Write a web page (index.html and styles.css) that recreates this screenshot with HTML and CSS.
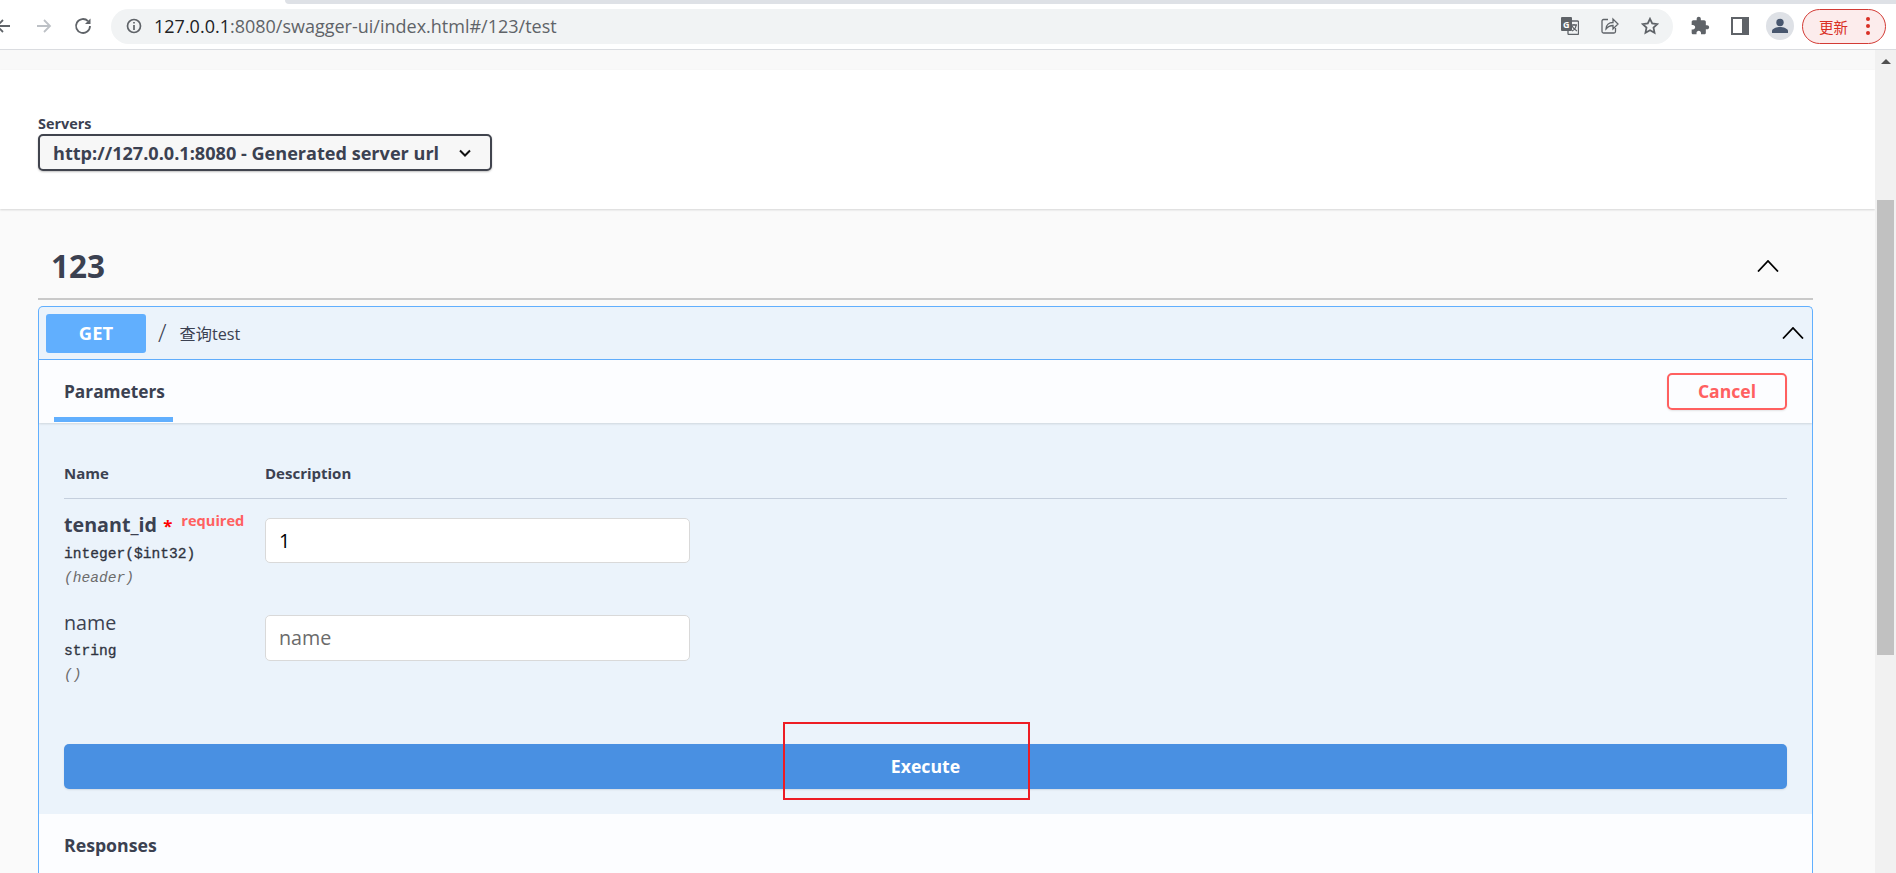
FILE: index.html
```html
<!DOCTYPE html>
<html lang="en">
<head>
    <meta charset="UTF-8">
    <meta name="viewport" content="width=device-width, initial-scale=1.0">
    <title>Swagger UI</title>
    <link rel="stylesheet" href="styles.css">
</head>
<body>
    <!-- Browser chrome -->
    <div class="tab-strip"><div class="tab-edge"></div></div>
    <header class="toolbar">
        <svg class="nav-icon back" viewBox="0 0 18 18"><path d="M16 9H3M9 3L3 9l6 6"/></svg>
        <svg class="nav-icon forward" viewBox="0 0 18 18"><path d="M2 9h13M9 3l6 6-6 6"/></svg>
        <svg class="nav-icon reload" viewBox="0 0 18 18"><path d="M16 9a7 7 0 1 1-2-4.900"/><path class="solid" d="M16.500 1.500v5.500h-5.500z"/></svg>
        <div class="address-bar">
            <svg class="info-icon" viewBox="0 0 16 16"><circle cx="8" cy="8" r="6.500"/><path d="M8 7v5M8 4v1.600"/></svg>
            <span class="url"><span class="url-host">127.0.0.1</span>:8080/swagger-ui/index.html#/123/test</span>
            <div class="address-actions">
                <svg class="bar-icon" viewBox="0 0 18 18">
                    <rect class="solid" x="0" y="0" width="11" height="14" rx="1"/>
                    <rect x="7" y="4" width="10.500" height="13.500" rx="1"/>
                    <text x="2" y="10.500" class="translate-g">G</text>
                    <path d="M10 8h6M13 7v1M11 14c2-1 4-3 4-6M11 9c1 2 3 4 5 5"/>
                </svg>
                <svg class="bar-icon" viewBox="0 0 18 18"><path d="M7 2.500H2.500a1.500 1.500 0 0 0-1.500 1.500v10.500a1.500 1.500 0 0 0 1.500 1.500h10.500a1.500 1.500 0 0 0 1.500-1.500V11"/><path d="M5 12c0-4 3-6.500 7-6.500V2l5 5-5 5V8.500c-3 0-5 1-7 3.500z"/></svg>
                <svg class="bar-icon star" viewBox="0 0 18 18"><path d="M9 1.800l2.200 4.700 5.100.6-3.800 3.500 1 5.100L9 13.200l-4.500 2.500 1-5.100-3.800-3.500 5.100-.6z"/></svg>
            </div>
        </div>
        <svg class="puzzle-icon" viewBox="0 0 24 24"><path d="M20.500 11H19V7c0-1.100-.9-2-2-2h-4V3.500C13 2.120 11.880 1 10.500 1S8 2.120 8 3.500V5H4c-1.100 0-1.990.9-1.990 2v3.800H3.500c1.490 0 2.700 1.210 2.700 2.700s-1.210 2.700-2.700 2.700H2V20c0 1.100.9 2 2 2h3.800v-1.500c0-1.490 1.210-2.700 2.700-2.700 1.490 0 2.700 1.210 2.700 2.700V22H17c1.100 0 2-.9 2-2v-4h1.500c1.380 0 2.500-1.120 2.500-2.500S21.880 11 20.500 11z"/></svg>
        <div class="side-panel-icon"></div>
        <div class="avatar">
            <svg viewBox="0 0 28 28"><circle cx="14" cy="10.500" r="3.700"/><path d="M6 21v-2c0-2.500 5-4 8-4s8 1.500 8 4v2z"/></svg>
        </div>
        <div class="update-button">
            <span class="update-label">更新</span>
            <span class="update-dots"><i></i><i></i><i></i></span>
        </div>
    </header>

    <div class="viewport">
        <main class="page">
            <div class="top-strip"></div>

            <!-- Servers -->
            <section class="servers">
                <div class="servers-label">Servers</div>
                <div class="server-select">
                    <span>http://127.0.0.1:8080 - Generated server url</span>
                    <svg class="select-arrow" viewBox="0 0 12 8"><path d="M1 1.500l5 5 5-5"/></svg>
                </div>
            </section>

            <section class="tag-section">
                <div class="tag-heading">
                    <h2>123</h2>
                    <svg class="chevron" viewBox="0 0 22 12"><path d="M1 11.500L11 1l10 10.500"/></svg>
                </div>

                <!-- Operation -->
                <div class="opblock">
                    <div class="opblock-summary">
                        <span class="method">GET</span>
                        <span class="path">/</span>
                        <span class="summary-text">查询test</span>
                        <svg class="chevron" viewBox="0 0 22 12"><path d="M1 11.500L11 1l10 10.500"/></svg>
                    </div>

                    <div class="tab-header">
                        <div class="tab-active">Parameters</div>
                        <button class="cancel-button">Cancel</button>
                    </div>

                    <div class="parameters">
                        <div class="param-head">
                            <div class="col-name">Name</div>
                            <div>Description</div>
                        </div>

                        <div class="param-row first">
                            <div class="col-name">
                                <div class="param-name bold">tenant_id <span class="star-mark">*</span><span class="required">required</span></div>
                                <div class="param-type">integer($int32)</div>
                                <div class="param-in">(header)</div>
                            </div>
                            <input class="param-input" type="text" value="1">
                        </div>

                        <div class="param-row">
                            <div class="col-name">
                                <div class="param-name">name</div>
                                <div class="param-type">string</div>
                                <div class="param-in">()</div>
                            </div>
                            <input class="param-input tall" type="text" placeholder="name">
                        </div>

                        <button class="execute-button">Execute</button>
                    </div>

                    <div class="responses">Responses</div>
                </div>
            </section>
        </main>

        <div class="scrollbar">
            <div class="scroll-up"></div>
            <div class="scroll-thumb"></div>
        </div>
    </div>

    <!-- Annotation drawn over the screenshot -->
    <div class="red-box"></div>
</body>
</html>
```

FILE: styles.css
```css
* {
    box-sizing: border-box;
}

html, body {
    margin: 0;
    height: 873px;
    overflow: hidden;
}

body {
    position: relative;
    font-family: "Open Sans", "Noto Sans CJK SC", sans-serif;
    background-color: #fff;
    color: #3b4151;
}

svg {
    display: block;
    flex: none;
}

/* Browser chrome */
.tab-strip {
    height: 4px;
    padding-left: 285px;
}

.tab-edge {
    height: 4px;
    background-color: #dee1e6;
    border-bottom-left-radius: 6px;
}

.toolbar {
    display: flex;
    align-items: center;
    height: 46px;
    border-bottom: 1px solid #dadce0;
    padding-bottom: 1px;
}

.nav-icon {
    width: 18px;
    height: 18px;
    fill: none;
    stroke: #5f6368;
    stroke-width: 1.8;
}

.nav-icon .solid {
    fill: #5f6368;
    stroke: none;
}

.back {
    margin-left: -6px;
}

.forward {
    margin-left: 23px;
    stroke: #bdc1c6;
}

.reload {
    margin-left: 21px;
}

.address-bar {
    display: flex;
    align-items: center;
    width: 1562px;
    height: 35px;
    margin-left: 19px;
    padding-left: 15px;
    border-radius: 18px;
    background-color: #f1f3f4;
}

.info-icon {
    width: 16px;
    height: 16px;
    fill: none;
    stroke: #5f6368;
    stroke-width: 1.700;
}

.url {
    margin-left: 12px;
    font-family: "Open Sans", sans-serif;
    font-size: 18px;
    color: #5f6368;
    white-space: nowrap;
}

.url-host {
    color: #202124;
}

.address-actions {
    display: flex;
    gap: 22px;
    margin-left: auto;
    margin-right: 14px;
}

.bar-icon {
    width: 18px;
    height: 18px;
    fill: none;
    stroke: #5f6368;
    stroke-width: 1.300;
}

.bar-icon .solid {
    fill: #5f6368;
    stroke: none;
}

.bar-icon.star {
    stroke-width: 1.800;
}

.translate-g {
    font-family: "Open Sans", sans-serif;
    font-size: 9px;
    font-weight: 700;
    fill: #fff;
    stroke: none;
}

.puzzle-icon {
    width: 20px;
    height: 20px;
    margin-left: 17px;
    fill: #5f6368;
}

.side-panel-icon {
    width: 18px;
    height: 18px;
    margin-left: 21px;
    border: 2px solid #5f6368;
    border-right-width: 7px;
}

.avatar {
    width: 28px;
    height: 28px;
    margin-left: 17px;
    border-radius: 50%;
    background-color: #dee1e6;
}

.avatar svg {
    fill: #47566e;
}

.update-button {
    display: flex;
    align-items: center;
    width: 84px;
    height: 35px;
    margin-left: 8px;
    padding-left: 16px;
    border: 1px solid #d33b35;
    border-radius: 18px;
    background-color: #fcecec;
    color: #d93025;
    font-size: 14.500px;
}

.update-dots {
    display: flex;
    flex-direction: column;
    gap: 3px;
    margin-left: 18px;
}

.update-dots i {
    display: block;
    width: 4px;
    height: 4px;
    border-radius: 50%;
    background-color: #d93025;
}

/* Page */
.viewport {
    display: flex;
    height: 823px;
}

.page {
    flex: 1;
    min-width: 0;
    background-color: #fafafa;
}

.top-strip {
    height: 20px;
    background-color: #f9f9f9;
}

.servers {
    height: 139px;
    padding: 44px 0 0 38px;
    background-color: #fff;
    box-shadow: 0 1px 2px rgba(0, 0, 0, 0.15);
}

.servers-label {
    font-size: 14.400px;
    font-weight: 700;
    line-height: 20px;
}

.server-select {
    display: flex;
    align-items: center;
    justify-content: space-between;
    width: 454px;
    height: 37px;
    padding: 0 19px 0 13px;
    border: 2px solid #41444e;
    border-radius: 5px;
    background-color: #f7f7f7;
    box-shadow: 0 1px 2px rgba(0, 0, 0, 0.25);
    font-size: 18.100px;
    font-weight: 700;
}

.select-arrow {
    width: 12px;
    height: 8px;
    fill: none;
    stroke: #111;
    stroke-width: 2;
}

.tag-section {
    padding: 0 62px 0 38px;
}

.tag-heading {
    display: flex;
    align-items: center;
    justify-content: space-between;
    height: 91px;
    padding: 24px 34px 0 13px;
    border-bottom: 2px solid #c9c9c9;
}

.tag-heading h2 {
    margin: 0;
    font-size: 31.500px;
    font-weight: 700;
}

.chevron {
    width: 22px;
    height: 12px;
    fill: none;
    stroke: #000;
    stroke-width: 1.800;
}

.opblock {
    height: 600px;
    margin-top: 6px;
    border: 1px solid #61affe;
    border-bottom: none;
    border-radius: 5px 5px 0 0;
    background-color: #ebf3fb;
}

.opblock-summary {
    display: flex;
    align-items: center;
    height: 53px;
    padding: 0 8px 0 7px;
    border-bottom: 1px solid #61affe;
}

.method {
    width: 100px;
    height: 39px;
    border-radius: 3px;
    background-color: #61affe;
    color: #fff;
    font-size: 18.400px;
    font-weight: 700;
    line-height: 38px;
    text-align: center;
}

.path {
    margin-left: 12px;
    padding-bottom: 3px;
    font-size: 25px;
    font-weight: 300;
}

.summary-text {
    margin-left: 13px;
    font-size: 16.200px;
}

.opblock-summary .chevron {
    margin-left: auto;
}

.tab-header {
    display: flex;
    align-items: flex-start;
    justify-content: space-between;
    height: 63px;
    padding: 0 25px 0 15px;
    background-color: #fcfdff;
    box-shadow: 0 1px 2px rgba(0, 0, 0, 0.12);
}

.tab-active {
    width: 119px;
    height: 62px;
    padding-left: 10px;
    border-bottom: 5px solid #61affe;
    font-size: 17.300px;
    font-weight: 700;
    line-height: 63px;
}

.cancel-button {
    width: 120px;
    height: 37px;
    margin-top: 13px;
    padding-bottom: 3px;
    border: 2px solid #ff6060;
    border-radius: 5px;
    background-color: transparent;
    color: #ff6060;
    font-family: inherit;
    font-size: 17.600px;
    font-weight: 700;
    box-shadow: 0 1px 2px rgba(0, 0, 0, 0.1);
}

.parameters {
    height: 391px;
    padding: 39px 25px 0 25px;
}

.param-head {
    display: flex;
    height: 37px;
    border-bottom: 1px solid #c5cfdd;
    font-size: 15px;
    font-weight: 700;
    line-height: 22px;
}

.col-name {
    width: 201px;
    flex: none;
}

.param-row {
    display: flex;
    height: 97px;
}

.param-row.first {
    height: 117px;
    padding-top: 19px;
}

.param-name {
    font-size: 19.700px;
    line-height: 24px;
    white-space: nowrap;
    margin-top: -5px;
}

.bold {
    font-weight: 700;
}

.star-mark {
    margin-left: 1px;
    color: #f00;
    font-size: 16.800px;
}

.required {
    position: relative;
    top: -6px;
    margin-left: 9px;
    color: #ff6060;
    font-size: 14.600px;
    font-weight: 700;
}

.param-type {
    margin-top: 6px;
    font-family: "Liberation Mono", monospace;
    font-size: 14.600px;
    line-height: 20px;
    color: #2f3340;
    -webkit-text-stroke: 0.3px #2f3340;
}

.param-in {
    margin-top: 4px;
    font-family: "Liberation Mono", monospace;
    font-size: 14.600px;
    font-style: italic;
    line-height: 20px;
    color: #6b6b6b;
}

.param-input {
    width: 425px;
    height: 45px;
    padding: 0 13px;
    border: 1px solid #d9d9d9;
    border-radius: 5px;
    background-color: #fff;
    color: #000;
    font-family: inherit;
    font-size: 19.700px;
}

.param-input.tall {
    height: 46px;
    margin-top: -1px;
    padding-bottom: 2px;
}

.param-input::placeholder {
    color: #6b6b6b;
}

.execute-button {
    display: block;
    width: 100%;
    height: 45px;
    margin-top: 31px;
    padding-bottom: 3px;
    border: none;
    border-radius: 5px;
    background-color: #4990e2;
    color: #fff;
    font-family: inherit;
    font-size: 17.700px;
    font-weight: 700;
    box-shadow: 0 1px 2px rgba(0, 0, 0, 0.1);
}

.responses {
    height: 60px;
    padding: 19px 0 0 25px;
    background-color: #fcfdff;
    font-size: 17.700px;
    font-weight: 700;
    line-height: 24px;
}

/* Scrollbar */
.scrollbar {
    width: 21px;
    padding: 0 2px;
    background-color: #f1f1f1;
}

.scroll-up {
    width: 0;
    height: 0;
    margin: 9px auto 0;
    border-left: 5px solid transparent;
    border-right: 5px solid transparent;
    border-bottom: 5px solid #505050;
}

.scroll-thumb {
    height: 455px;
    margin-top: 136px;
    background-color: #c1c1c1;
}

/* Annotation */
.red-box {
    position: absolute;
    left: 783px;
    top: 722px;
    width: 247px;
    height: 78px;
    border: 2px solid #ed1c24;
}
```
